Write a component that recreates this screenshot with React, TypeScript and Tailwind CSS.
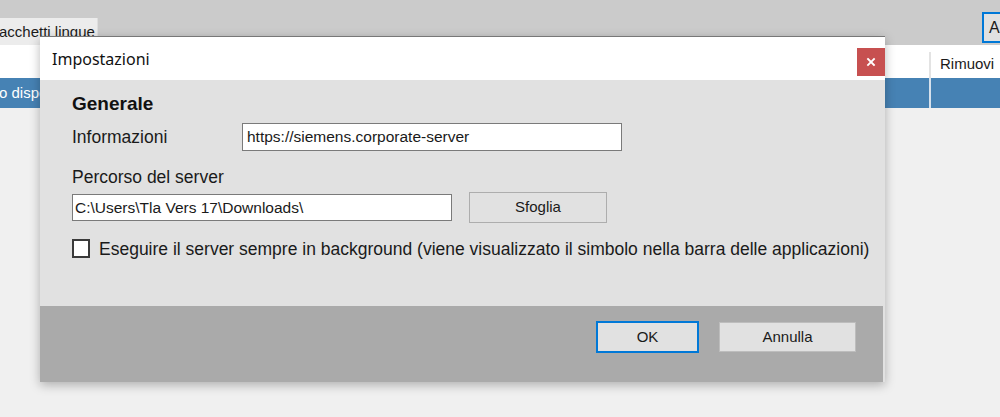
import React from "react";

const arial = { fontFamily: '"Liberation Sans", Arial, sans-serif' };

export default function App() {
  return (
    <div
      className="relative w-[1000px] h-[417px] overflow-hidden bg-[#f0f0f0] text-[#1a1a1a]"
      style={arial}
    >
      {/* top band */}
      <div className="h-[45px] bg-[#cbcbcb] flex items-start justify-between">
        <div className="mt-[18px] h-[27px] w-[98px] bg-[#ececec] border-r border-[#dedede] flex items-start">
          <span className="text-[15px] leading-[18px] mt-[5px] whitespace-nowrap -ml-[1px]">
            acchetti lingue
          </span>
        </div>
        <div className="mt-[12px] h-[31px] w-[40px] shrink-0 -mr-[22px] border-2 border-[#0078d7] bg-[#e1e1e1] flex items-center pl-[5px]">
          <span className="text-[16px] whitespace-nowrap">A</span>
        </div>
      </div>

      {/* table header */}
      <div className="h-[33px] bg-white flex">
        <div className="flex-1" />
        <div className="w-[71px] mt-[7px] border-l-2 border-[#e3e3e3] flex items-start pl-[9px]">
          <span className="text-[15px] leading-[18px] mt-[3px]">Rimuovi</span>
        </div>
      </div>

      {/* selected row */}
      <div className="h-[30px] bg-[#4682b4] flex">
        <div className="flex-1 flex items-center overflow-hidden">
          <span className="text-[15px] text-white whitespace-nowrap -ml-[1px]">
            o disponibile
          </span>
        </div>
        <div className="w-[71px] border-l-2 border-[#d6e1ec]" />
      </div>

      {/* dialog */}
      <div className="absolute left-[40px] top-[36px] w-[845px] flex flex-col border-t border-[#777777] shadow-[0_3px_10px_rgba(0,0,0,0.28)]">
        {/* title bar */}
        <div className="h-[43px] bg-white flex items-start justify-between">
          <span
            className="ml-[12px] mt-[11px] text-[16px] leading-[22px] text-[#111]"
            style={{ fontFamily: '"Noto Sans", "Open Sans", sans-serif' }}
          >
            Impostazioni
          </span>
          <div className="mt-[11px] w-[28px] h-[28px] bg-[#c75050] flex items-center justify-center">
            <svg width="10" height="10" viewBox="0 0 10 10">
              <path d="M2 2 L8 8 M8 2 L2 8" stroke="white" strokeWidth="1.8" strokeLinecap="square" />
            </svg>
          </div>
        </div>

        {/* body */}
        <div className="h-[226px] bg-[#e1e1e1] pl-[32px] pt-[13px] flex flex-col">
          <div className="text-[19px] leading-[22px] font-bold text-[#111]">Generale</div>

          <div className="mt-[8px] flex items-center h-[28px]">
            <div className="w-[170px] text-[17.5px] leading-[20px]">Informazioni</div>
            <div className="w-[380px] h-[28px] bg-white border border-[#7a7a7a] flex items-center pl-[4px]">
              <span className="text-[15.5px] whitespace-nowrap">https://siemens.corporate-server</span>
            </div>
          </div>

          <div className="mt-[16px] text-[17.5px] leading-[20px]">Percorso del server</div>

          <div className="mt-[5px] flex items-center h-[31px]">
            <div className="w-[380px] h-[27px] bg-white border border-[#7a7a7a] flex items-center pl-[2px]">
              <span className="text-[15.5px] whitespace-nowrap">C:\Users\Tla Vers 17\Downloads\</span>
            </div>
            <div className="ml-[17px] w-[138px] h-[31px] bg-[#e1e1e1] border border-[#adadad] flex items-center justify-center">
              <span className="text-[15px]">Sfoglia</span>
            </div>
          </div>

          <div className="mt-[16px] flex items-center h-[19px]">
            <div className="w-[18px] h-[19px] bg-white border-2 border-[#3a3a3a]" />
            <span className="ml-[9px] text-[17.5px] leading-[20px] whitespace-nowrap">
              Eseguire il server sempre in background (viene visualizzato il simbolo nella barra delle applicazioni)
            </span>
          </div>
        </div>

        {/* footer */}
        <div className="h-[76px] bg-[#e1e1e1] flex">
          <div className="flex-1 bg-[#aaaaaa] flex items-start justify-end pt-[15px] pr-[27px] gap-[20px]">
            <div className="w-[103px] h-[32px] bg-[#e1e1e1] border-2 border-[#0078d7] flex items-center justify-center">
              <span className="text-[15px]">OK</span>
            </div>
            <div className="mt-[1px] w-[137px] h-[30px] bg-[#e1e1e1] border border-[#bdbdbd] flex items-center justify-center">
              <span className="text-[15px]">Annulla</span>
            </div>
          </div>
          <div className="w-[2px]" />
        </div>
      </div>
    </div>
  );
}
